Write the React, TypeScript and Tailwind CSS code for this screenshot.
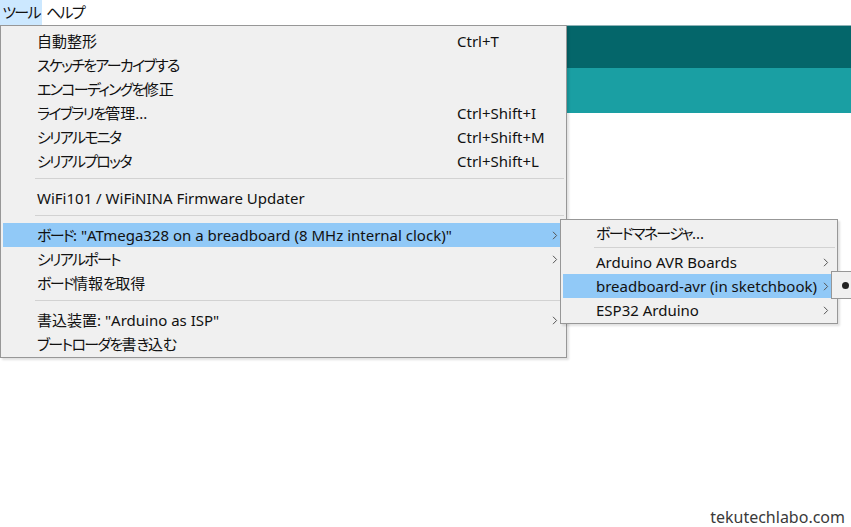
import React from "react";

// Renders a label, tightening kana runs so they sit as narrow as the menu font's proportional kana.
function Label({ text }: { text: string }) {
  const parts = text.split(/([\u3040-\u30ff]+)/).filter((p) => p.length > 0);
  return (
    <>
      {parts.map((p, i) =>
        /^[\u3040-\u30ff]+$/.test(p) ? (
          <span key={i} className="tracking-[-1.7px]">
            {p}
          </span>
        ) : (
          <span key={i}>{p}</span>
        )
      )}
    </>
  );
}

function Chevron() {
  return (
    <svg width="6" height="9" viewBox="0 0 6 9" className="shrink-0">
      <path d="M1 0.8 L4.6 4.5 L1 8.2" fill="none" stroke="#555" strokeWidth="1" />
    </svg>
  );
}

type Item =
  | { kind: "item"; label: string; shortcut?: string; sub?: boolean; active?: boolean }
  | { kind: "sep" };

const toolsMenu: Item[] = [
  { kind: "item", label: "自動整形", shortcut: "Ctrl+T" },
  { kind: "item", label: "スケッチをアーカイブする" },
  { kind: "item", label: "エンコーディングを修正" },
  { kind: "item", label: "ライブラリを管理...", shortcut: "Ctrl+Shift+I" },
  { kind: "item", label: "シリアルモニタ", shortcut: "Ctrl+Shift+M" },
  { kind: "item", label: "シリアルプロッタ", shortcut: "Ctrl+Shift+L" },
  { kind: "sep" },
  { kind: "item", label: "WiFi101 / WiFiNINA Firmware Updater" },
  { kind: "sep" },
  { kind: "item", label: 'ボード: "ATmega328 on a breadboard (8 MHz internal clock)"', sub: true, active: true },
  { kind: "item", label: "シリアルポート", sub: true },
  { kind: "item", label: "ボード情報を取得" },
  { kind: "sep" },
  { kind: "item", label: '書込装置: "Arduino as ISP"', sub: true },
  { kind: "item", label: "ブートローダを書き込む" },
];

function MenuRow({ item }: { item: Extract<Item, { kind: "item" }> }) {
  return (
    <div
      className={`mx-[2px] h-[24px] flex items-center pl-[34px] pr-[6px] ${
        item.active ? "bg-[#91c9f7]" : ""
      }`}
    >
      <span className="w-[420px] whitespace-nowrap">
        <Label text={item.label} />
      </span>
      <span className="flex-1 whitespace-nowrap">{item.shortcut ?? ""}</span>
      {item.sub ? <Chevron /> : null}
    </div>
  );
}

function Separator() {
  return (
    <div className="h-[13px] flex items-start pt-[5px] pl-[34px] pr-[2px]">
      <div className="w-full h-[1px] bg-[#d2d2d2]" />
    </div>
  );
}

export default function App() {
  return (
    <div className="relative w-[851px] h-[527px] bg-white overflow-hidden text-[15px] text-[#111] leading-none font-['Noto_Sans','Noto_Sans_CJK_JP',sans-serif] [font-feature-settings:'palt']">
      {/* menu bar */}
      <div className="h-[25px] flex items-stretch whitespace-nowrap">
        <div className="w-[42px] flex items-center justify-center bg-[#cce8ff]">
          <Label text="ツール" />
        </div>
        <div className="pl-[4px] flex items-center">
          <Label text="ヘルプ" />
        </div>
      </div>

      {/* editor toolbar behind the menu */}
      <div className="border-t border-[#8fb3b7]">
        <div className="h-[42px] bg-[#04666a]" />
        <div className="h-[45px] bg-[#1a9fa3]" />
      </div>

      {/* tools dropdown */}
      <div className="absolute left-0 top-[25px] w-[567px] bg-[#f0f0f0] border border-[#979797] pt-[3px] pb-[1px] shadow-[2px_2px_2px_rgba(0,0,0,0.12)]">
        {toolsMenu.map((it, i) =>
          it.kind === "sep" ? <Separator key={i} /> : <MenuRow key={i} item={it} />
        )}
      </div>

      {/* board submenu */}
      <div className="absolute left-[560px] top-[219px] w-[278px] bg-[#f0f0f0] border border-[#979797] pt-[2px] pb-[1px] shadow-[2px_2px_2px_rgba(0,0,0,0.12)]">
        <div className="mx-[2px] h-[23px] flex items-center pl-[33px] whitespace-nowrap">
          <Label text="ボードマネージャ..." />
        </div>
        <div className="h-[5px] flex items-start pt-[2px] pl-[33px] pr-[2px]">
          <div className="w-full h-[1px] bg-[#d2d2d2]" />
        </div>
        {[
          { label: "Arduino AVR Boards", active: false },
          { label: "breadboard-avr (in sketchbook)", active: true },
          { label: "ESP32 Arduino", active: false },
        ].map((r) => (
          <div
            key={r.label}
            className={`mx-[2px] h-[24px] flex items-center pl-[33px] pr-[6px] ${
              r.active ? "bg-[#91c9f7]" : ""
            }`}
          >
            <span className="flex-1 whitespace-nowrap">{r.label}</span>
            <Chevron />
          </div>
        ))}
      </div>

      {/* third-level submenu */}
      <div className="absolute left-[831px] top-[271px] w-[30px] h-[28px] bg-[#f0f0f0] border border-[#979797] flex items-center pl-[10px]">
        <div className="w-[7px] h-[7px] rounded-full bg-[#222]" />
      </div>

      {/* watermark */}
      <div className="absolute right-[6px] bottom-[2px] text-[16px] text-[#3a3a3a] font-['Noto_Sans',sans-serif]">
        tekutechlabo.com
      </div>
    </div>
  );
}
